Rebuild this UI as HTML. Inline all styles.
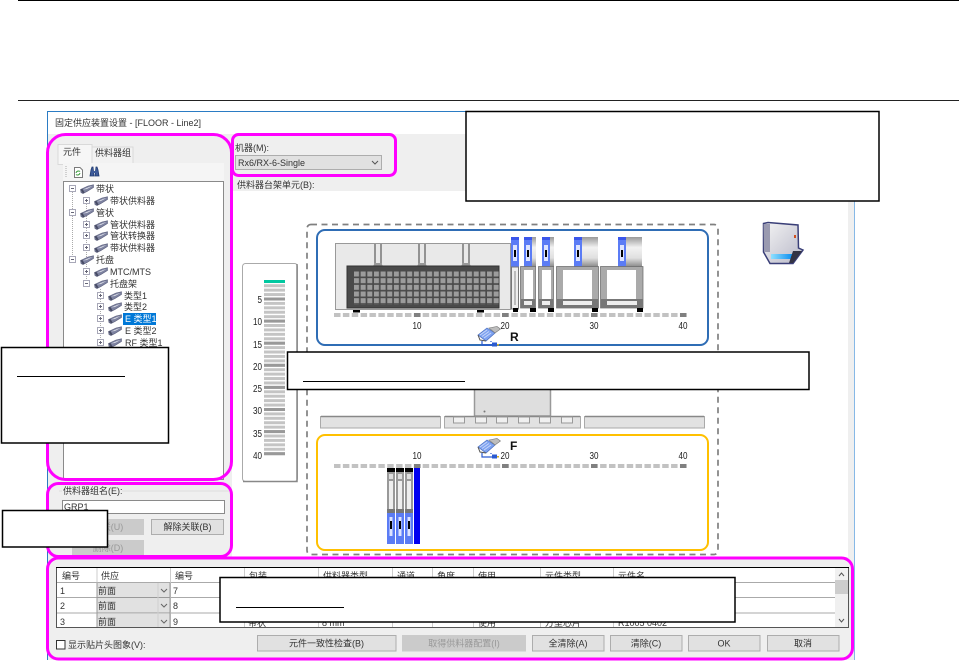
<!DOCTYPE html>
<html>
<head>
<meta charset="utf-8">
<style>
html,body{margin:0;padding:0;background:#fff;width:959px;height:661px;overflow:hidden}
svg{display:block}
text{font-family:"Liberation Sans","WenQuanYi Zen Hei","Noto Sans CJK SC",sans-serif;font-size:9px;fill:#333;white-space:pre}
.n{font-size:10px;fill:#222}
.b{text-anchor:middle}
.d{fill:#999}
</style>
</head>
<body>
<svg width="959" height="661" viewBox="0 0 959 661" xmlns="http://www.w3.org/2000/svg">
<defs>
<pattern id="hp" patternUnits="userSpaceOnUse" x="334" y="0" width="8.87" height="10"><rect width="6.5" height="10" fill="#c2c2c2"/></pattern>
<pattern id="vp" patternUnits="userSpaceOnUse" x="0" y="279.8" width="10" height="4.42"><rect width="10" height="3" fill="#c4c4c4"/></pattern>
<pattern id="gp" patternUnits="userSpaceOnUse" x="354" y="271.500" width="6.65" height="6.67"><rect width="5" height="5" fill="#9c9c9c"/></pattern>
<linearGradient id="cyl" x1="0" y1="0" x2="0" y2="1"><stop offset="0" stop-color="#999"/><stop offset=".35" stop-color="#f2f2f2"/><stop offset=".7" stop-color="#e0e0e0"/><stop offset="1" stop-color="#888"/></linearGradient>
<linearGradient id="mach" x1="0" y1="0" x2="1" y2="1"><stop offset="0" stop-color="#f4f4f4"/><stop offset="1" stop-color="#b8b8c8"/></linearGradient>
<linearGradient id="cy" x1="0" y1="0" x2="1" y2="0"><stop offset="0" stop-color="#8fe0ff"/><stop offset="1" stop-color="#1090f0"/></linearGradient>
<symbol id="c" width="14" height="10" viewBox="0 0 14 10"><path d="M0.500 5.500 L8 2 L13.500 0.800 L13.500 3.500 L7 7.500 L3 9.500 L1 8.500 Z" fill="#7d82a0" stroke="#5c607c" stroke-width=".6"/><path d="M3 5.500 L9 3 L12.500 2 L7 5 Z" fill="#d8dae4"/><path d="M0.500 5.500 L3 9.500 L4.500 8.500 L2.500 5 Z" fill="#474b64"/></symbol>
<symbol id="plus" width="7" height="7" viewBox="0 0 7 7"><rect x=".5" y=".5" width="6" height="6" fill="#fff" stroke="#a8a8b8"/><path d="M2 3.5H5M3.5 2V5" stroke="#667" stroke-width="1"/></symbol>
<symbol id="minus" width="7" height="7" viewBox="0 0 7 7"><rect x=".5" y=".5" width="6" height="6" fill="#fff" stroke="#a8a8b8"/><path d="M2 3.5H5" stroke="#667" stroke-width="1"/></symbol>
<symbol id="cart" width="24" height="21" viewBox="0 0 24 21"><path d="M1 9 L10 2 L18 7 L9 15 Z" fill="#7ea2f0" stroke="#4a6fc0" stroke-width=".7"/><path d="M3 9 L10 4 M5 10.5 L12 5.5 M7 12 L14 7" stroke="#c6d6fa" stroke-width="1"/><path d="M12 2 L20 0.5 L23.5 3 L18 7 Z" fill="#bdbdbd" stroke="#777" stroke-width=".6"/><path d="M1 9 L3 14 L9 15" fill="none" stroke="#555" stroke-width="1"/><path d="M5 15 V19 H16 M14 15 V16" fill="none" stroke="#2a5ad0" stroke-width="1.2"/><rect x="15" y="16.5" width="5" height="4" fill="#2a5ad0"/><rect x="20" y="18" width="2" height="1.5" fill="#d8b020"/></symbol>
<symbol id="bf" width="8" height="30" viewBox="0 0 8 30"><rect width="8" height="30" fill="#5b7cf5"/><rect y="0" width="8" height="3" fill="#3a56ea"/><rect x="2" y="8" width="4" height="16" fill="#dde4ff"/><rect x="3" y="13" width="2" height="7" fill="#000"/></symbol>
<symbol id="ff" width="8" height="76" viewBox="0 0 8 76"><rect width="8" height="4" fill="#000"/><rect y="4" width="8" height="41" fill="#999"/><rect x="2" y="6" width="4" height="5" fill="#ddd"/><rect x="2" y="13" width="4" height="30" fill="#eee"/><rect y="41" width="8" height="4" fill="#777"/><rect y="45" width="8" height="31" fill="#5b7cf5"/><rect x="2.5" y="49" width="3" height="19" fill="#dde4ff"/><rect x="3" y="53" width="2" height="8" fill="#000"/></symbol>
</defs>

<!-- doc lines -->
<rect x="18" y="0" width="941" height="1" fill="#000"/>
<rect x="18" y="100" width="941" height="1" fill="#222"/>

<!-- dialog -->
<rect x="47" y="111" width="420" height="1" fill="#2b7cc4"/>
<rect x="47" y="111" width="1" height="549" fill="#2b7cc4"/>
<rect x="854" y="201" width="1" height="459" fill="#86b8e6"/>
<rect x="48" y="134" width="800" height="57" fill="#efefef"/>
<rect x="48" y="134" width="184" height="423" fill="#efefef"/>
<rect x="848" y="191" width="6" height="366" fill="#efefef"/>
<rect x="48" y="557" width="806" height="103" fill="#efefef"/>
<text x="55" y="126">固定供应装置设置 - [FLOOR - Line2]</text>

<!-- tabs -->
<rect x="92" y="147" width="41" height="17" fill="#f2f2f2" stroke="#d9d9d9"/>
<rect x="58" y="144.5" width="34" height="20" fill="#f6f6f6" stroke="#d9d9d9"/>
<text x="63" y="155">元件</text>
<text x="95" y="156">供料器组</text>
<rect x="63" y="163" width="161" height="18" fill="#f5f5f5"/>
<path d="M66 166V178" stroke="#aaa" stroke-dasharray="1 1"/>
<path d="M74.500 167.500H80L82.500 170V177.500H74.500Z" fill="#fff" stroke="#7a7a7a"/>
<path d="M76 173a2.500 2.500 0 0 1 4-1.500M80 173a2.500 2.500 0 0 1-4 1.500" fill="none" stroke="#3a9a3a" stroke-width="1"/>
<path d="M90 176l1-6 1-3h1l1 9zM95 176l1-9h1l1 3 1 6z" fill="#3d5a9a" stroke="#1f3a70" stroke-width=".8"/>
<rect x="93" y="171" width="3" height="2" fill="#3d5a9a"/>

<!-- tree -->
<rect x="63.500" y="181.500" width="160" height="298" fill="#fff" stroke="#8a8a8a"/>
<path d="M72.500 192V259M86.500 204V283M100.500 289V345" fill="none" stroke="#aaa" stroke-dasharray="1 1"/>
<use href="#minus" x="69" y="185"/><use href="#c" x="80" y="184"/><text x="96" y="192">带状</text>
<use href="#plus" x="83" y="197"/><use href="#c" x="94" y="196"/><text x="110" y="204">带状供料器</text>
<use href="#minus" x="69" y="209"/><use href="#c" x="80" y="208"/><text x="96" y="216">管状</text>
<use href="#plus" x="83" y="221"/><use href="#c" x="94" y="220"/><text x="110" y="228">管状供料器</text>
<use href="#plus" x="83" y="232"/><use href="#c" x="94" y="231"/><text x="110" y="239">管状转换器</text>
<use href="#plus" x="83" y="244"/><use href="#c" x="94" y="243"/><text x="110" y="251">带状供料器</text>
<use href="#minus" x="69" y="256"/><use href="#c" x="80" y="255"/><text x="96" y="263">托盘</text>
<use href="#plus" x="83" y="268"/><use href="#c" x="94" y="267"/><text x="110" y="275">MTC/MTS</text>
<use href="#minus" x="83" y="280"/><use href="#c" x="94" y="279"/><text x="110" y="287">托盘架</text>
<use href="#plus" x="97" y="292"/><use href="#c" x="108" y="291"/><text x="124" y="299">类型1</text>
<use href="#plus" x="97" y="303"/><use href="#c" x="108" y="302"/><text x="124" y="310">类型2</text>
<use href="#plus" x="97" y="315"/><use href="#c" x="108" y="314"/><rect x="123" y="313" width="33" height="12" fill="#0078d7"/><text x="125" y="322" style="fill:#fff">E 类型1</text>
<use href="#plus" x="97" y="327"/><use href="#c" x="108" y="326"/><text x="125" y="334">E 类型2</text>
<use href="#plus" x="97" y="339"/><use href="#c" x="108" y="338"/><text x="125" y="346">RF 类型1</text>

<!-- group -->
<path d="M59 491H62M122 491H229" stroke="#dcdcdc"/>
<text x="63" y="494">供料器组名(E):</text>
<rect x="62.500" y="500.500" width="162" height="13" fill="#fff" stroke="#8a8a8a"/>
<text x="64" y="510">GRP1</text>
<rect x="72" y="519" width="72" height="16" fill="#cbcbcb"/>
<text x="108" y="530" class="b d">关联(U)</text>
<rect x="151.500" y="519.500" width="72" height="15" fill="#e1e1e1" stroke="#adadad"/>
<text x="187.500" y="530" class="b">解除关联(B)</text>
<rect x="72" y="540" width="72" height="16" fill="#cbcbcb"/>
<text x="108" y="551" class="b d">删除(D)</text>

<!-- machine -->
<text x="235" y="151">机器(M):</text>
<rect x="235.500" y="155.500" width="146" height="14" fill="#e1e1e1" stroke="#adadad"/>
<text x="238" y="166">Rx6/RX-6-Single</text>
<path d="M372 161l3 3 3-3" fill="none" stroke="#555"/>
<text x="237" y="188">供料器台架单元(B):</text>

<!-- gauge -->
<rect x="242.500" y="263.500" width="55" height="218" rx="3" fill="#fff" stroke="#aaa"/>
<path d="M297 264V481.500H243" fill="none" stroke="#888" stroke-width="1.500"/>
<rect x="264" y="280" width="21" height="176.500" fill="url(#vp)"/>
<rect x="264" y="280" width="21" height="3" fill="#00c8a0"/>
<rect x="264" y="297.500" width="21" height="3" fill="#999"/><rect x="264" y="319.600" width="21" height="3" fill="#999"/><rect x="264" y="341.700" width="21" height="3" fill="#999"/><rect x="264" y="363.800" width="21" height="3" fill="#999"/><rect x="264" y="385.900" width="21" height="3" fill="#999"/><rect x="264" y="408" width="21" height="3" fill="#999"/><rect x="264" y="430.100" width="21" height="3" fill="#999"/><rect x="264" y="452.200" width="21" height="3" fill="#999"/>
<g text-anchor="end">
<text class="n" x="262" y="303" textLength="4.500" lengthAdjust="spacingAndGlyphs">5</text>
<text class="n" x="262" y="325" textLength="9" lengthAdjust="spacingAndGlyphs">10</text>
<text class="n" x="262" y="348" textLength="9" lengthAdjust="spacingAndGlyphs">15</text>
<text class="n" x="262" y="370" textLength="9" lengthAdjust="spacingAndGlyphs">20</text>
<text class="n" x="262" y="392" textLength="9" lengthAdjust="spacingAndGlyphs">25</text>
<text class="n" x="262" y="414" textLength="9" lengthAdjust="spacingAndGlyphs">30</text>
<text class="n" x="262" y="437" textLength="9" lengthAdjust="spacingAndGlyphs">35</text>
<text class="n" x="262" y="459" textLength="9" lengthAdjust="spacingAndGlyphs">40</text>
</g>

<!-- dashed outer -->
<rect x="307" y="224.500" width="411" height="330" rx="4" fill="none" stroke="#808080" stroke-width="1.700" stroke-dasharray="6 4.500"/>

<!-- R zone -->
<rect x="317" y="230" width="391" height="115" rx="8" fill="none" stroke="#2f6db5" stroke-width="2"/>
<rect x="335.500" y="243.500" width="175" height="66" fill="#e9e9e9" stroke="#999"/>
<path d="M375 244V266M381 244V266M419 244V266M425 244V266M463 244V266M469 244V266" stroke="#777" stroke-width="1.500"/>
<path d="M373 266l2-3h6l2 3zM417 266l2-3h6l2 3zM461 266l2-3h6l2 3z" fill="#999"/>
<rect x="347" y="266" width="152" height="42" fill="#4a4a4a" stroke="#333"/>
<rect x="354" y="271.500" width="146" height="33.400" fill="url(#gp)"/>
<rect x="353" y="310" width="7" height="2.500" fill="#000"/><rect x="477" y="310" width="7" height="2.500" fill="#000"/>

<use href="#bf" x="511" y="237"/>
<rect x="524" y="237" width="12" height="30" fill="url(#cyl)"/><use href="#bf" x="524" y="237"/>
<rect x="542" y="237" width="12" height="30" fill="url(#cyl)"/><use href="#bf" x="542" y="237"/>
<rect x="574" y="237" width="24" height="30" fill="url(#cyl)"/><use href="#bf" x="574" y="237"/>
<rect x="618" y="237" width="24" height="30" fill="url(#cyl)"/><use href="#bf" x="618" y="237"/>

<rect x="511.500" y="267" width="7" height="42" fill="#eee" stroke="#777"/>
<rect x="514" y="271" width="2" height="34" fill="#bbb"/>
<g fill="#aaa" stroke="#666" stroke-width=".7">
<rect x="520.500" y="266.500" width="15" height="41.500"/><rect x="538.500" y="266.500" width="15" height="41.500"/><rect x="556.500" y="266.500" width="42" height="41.500"/><rect x="600.500" y="266.500" width="42.500" height="41.500"/>
</g>
<rect x="524" y="270" width="9" height="29" fill="#fff"/><rect x="542" y="270" width="9" height="29" fill="#fff"/><rect x="563" y="270" width="29" height="29" fill="#fff"/><rect x="607" y="270" width="29" height="29" fill="#fff"/>
<rect x="521" y="299" width="14.500" height="9" fill="#777"/><rect x="539" y="299" width="14.500" height="9" fill="#777"/><rect x="557" y="299" width="41.500" height="9" fill="#777"/><rect x="601" y="299" width="42" height="9" fill="#777"/>
<rect x="524" y="301" width="8" height="4" fill="#eee"/><rect x="542" y="301" width="8" height="4" fill="#eee"/><rect x="563" y="301" width="29" height="4" fill="#eee"/><rect x="607" y="301" width="30" height="4" fill="#eee"/>
<rect x="513" y="308" width="5" height="4" fill="#000"/><rect x="530" y="308" width="6" height="4" fill="#000"/><rect x="548" y="308" width="6" height="4" fill="#000"/><rect x="592" y="308" width="6" height="4" fill="#000"/><rect x="637" y="308" width="6" height="4" fill="#000"/>

<rect x="334" y="313" width="353" height="4" fill="url(#hp)"/>
<rect x="414" y="313" width="6.500" height="4" fill="#808080"/><rect x="502" y="313" width="6.500" height="4" fill="#808080"/><rect x="591" y="313" width="6.500" height="4" fill="#808080"/><rect x="680" y="313" width="6.500" height="4" fill="#808080"/>
<text class="n b" x="417" y="329" textLength="9" lengthAdjust="spacingAndGlyphs">10</text><text class="n b" x="505" y="329" textLength="9" lengthAdjust="spacingAndGlyphs">20</text><text class="n b" x="594" y="329" textLength="9" lengthAdjust="spacingAndGlyphs">30</text><text class="n b" x="683" y="329" textLength="9" lengthAdjust="spacingAndGlyphs">40</text>
<use href="#cart" x="477" y="326"/>
<text x="510" y="341" style="font-size:12px;font-weight:bold;fill:#111">R</text>

<!-- center head -->
<rect x="474.500" y="385" width="76" height="31" fill="#dedede" stroke="#999" stroke-width="1.500"/>
<circle cx="484.500" cy="411.500" r="1" fill="#777"/>
<g fill="#e2e2e2" stroke="#aaa">
<rect x="320.500" y="416.500" width="120" height="11.500"/><rect x="444.500" y="416.500" width="136" height="11.500"/><rect x="584.500" y="416.500" width="120" height="11.500"/>
</g>
<path d="M321 416.500H440M445 416.500H580M585 416.500H704" stroke="#888" stroke-width="1.500"/>
<g fill="#f0f0f0" stroke="#999"><rect x="453.500" y="417" width="11" height="6"/><rect x="475.500" y="417" width="11" height="6"/><rect x="496.500" y="417" width="11" height="6"/><rect x="518.500" y="417" width="11" height="6"/><rect x="539.500" y="417" width="11" height="6"/><rect x="561.500" y="417" width="11" height="6"/></g>

<!-- F zone -->
<rect x="317" y="435" width="391" height="115" rx="8" fill="none" stroke="#ffc000" stroke-width="2"/>
<rect x="334" y="464" width="353" height="4" fill="url(#hp)"/>
<rect x="414" y="464" width="6.500" height="4" fill="#808080"/><rect x="502" y="464" width="6.500" height="4" fill="#808080"/><rect x="591" y="464" width="6.500" height="4" fill="#808080"/><rect x="680" y="464" width="6.500" height="4" fill="#808080"/>
<text class="n b" x="417" y="459" textLength="9" lengthAdjust="spacingAndGlyphs">10</text><text class="n b" x="505" y="459" textLength="9" lengthAdjust="spacingAndGlyphs">20</text><text class="n b" x="594" y="459" textLength="9" lengthAdjust="spacingAndGlyphs">30</text><text class="n b" x="683" y="459" textLength="9" lengthAdjust="spacingAndGlyphs">40</text>
<use href="#cart" x="477" y="438"/>
<text x="510" y="450" style="font-size:12px;font-weight:bold;fill:#111">F</text>
<use href="#ff" x="387" y="468"/><use href="#ff" x="396" y="468"/><use href="#ff" x="405" y="468"/>
<rect x="414" y="468" width="6" height="76" fill="#0000f0"/>

<!-- machine icon -->
<path d="M763.500 223.500L768 222.500 798 225 798.500 248 803 250 793 263.500 770 263.500 763.500 252Z" fill="url(#mach)" stroke="#3a3f78" stroke-width="1.500"/>
<path d="M763.500 224H770V252H764Z" fill="#9a9ab0"/>
<rect x="771" y="254" width="21" height="5" fill="url(#cy)"/>
<path d="M793 251L802 251 793 263 789 263Z" fill="#334"/>
<rect x="794" y="235" width="2" height="3" fill="#d05020"/>

<!-- table -->
<rect x="56.500" y="567.500" width="792" height="60" fill="#fff" stroke="#555"/>
<rect x="56" y="567" width="793" height="1" fill="#000"/>
<path d="M57 582.500H835M57 597.500H835M57 613H835" stroke="#aaa"/>
<path d="M97 568V627M170.500 568V627M244.500 568V627M318.500 568V627M392.500 568V627M432.500 568V627M473.500 568V627M540.500 568V627M613.500 568V627" stroke="#ccc"/>
<rect x="97" y="583" width="73" height="14" fill="#e1e1e1"/><rect x="97" y="598" width="73" height="14.500" fill="#e1e1e1"/><rect x="97" y="614" width="73" height="13" fill="#e1e1e1"/>
<path d="M97 582.500V627M170 582.500V627M97 597.500H170M97 613H170" stroke="#999"/>
<path d="M158 583V627" stroke="#cfcfcf"/>
<text x="62" y="579">编号</text><text x="101" y="579">供应</text><text x="175" y="579">编号</text><text x="249" y="579">包装</text><text x="323" y="579">供料器类型</text><text x="397" y="579">通道</text><text x="437" y="579">角度</text><text x="478" y="579">使用</text><text x="545" y="579">元件类型</text><text x="618" y="579">元件名</text>
<text x="60" y="594">1</text><text x="60" y="609">2</text><text x="60" y="625">3</text>
<text x="98" y="594">前面</text><text x="98" y="609">前面</text><text x="98" y="625">前面</text>
<text x="173" y="594">7</text><text x="173" y="609">8</text><text x="173" y="625">9</text>
<path d="M161 589l3 3 3-3M161 604l3 3 3-3M161 620l3 3 3-3" fill="none" stroke="#666"/>
<rect x="835" y="568" width="13" height="59" fill="#f0f0f0"/>
<rect x="835" y="580" width="13" height="14" fill="#cdcdcd"/>
<path d="M839 576l2.500-3 2.500 3M839 619l2.500 3 2.500-3" fill="none" stroke="#555"/>
<text x="248" y="626">带状</text><text x="322" y="626">8 mm</text><text x="478" y="626">使用</text><text x="545" y="626">方型芯片</text><text x="618" y="626">R1005 0402</text>

<!-- bottom controls -->
<rect x="56.500" y="640.500" width="8.500" height="8.500" fill="#fff" stroke="#333"/>
<text x="68" y="648">显示贴片头图象(V):</text>
<g fill="#e1e1e1" stroke="#adadad">
<rect x="257.500" y="635.500" width="138.500" height="15.500"/>
<rect x="532.500" y="635.500" width="71.500" height="15.500"/>
<rect x="610.500" y="635.500" width="71.500" height="15.500"/>
<rect x="688.500" y="635.500" width="71.500" height="15.500"/>
<rect x="767.500" y="635.500" width="71.500" height="15.500"/>
</g>
<rect x="402" y="635" width="124" height="16.500" fill="#cbcbcb"/>
<text x="326.500" y="646.500" class="b">元件一致性检查(B)</text>
<text x="464" y="646.500" class="b d">取得供料器配置(I)</text>
<text x="568" y="646.500" class="b">全清除(A)</text>
<text x="646" y="646.500" class="b">清除(C)</text>
<text x="724" y="646.500" class="b">OK</text>
<text x="803" y="646.500" class="b">取消</text>

<!-- magenta frames -->
<g fill="none" stroke="#ff00ff" stroke-width="3">
<rect x="47.500" y="134.500" width="184" height="345" rx="18"/>
<rect x="47.500" y="483.500" width="184" height="73" rx="11"/>
<rect x="232.500" y="134.500" width="163" height="41" rx="6"/>
<rect x="47.500" y="558" width="805" height="101" rx="11"/>
</g>

<!-- annotation boxes -->
<g fill="#fff" stroke="#000">
<rect x="466" y="111.500" width="413" height="89.500" stroke-width="1.500"/>
<rect x="1.500" y="347.500" width="167" height="95.500" stroke-width="1.500"/>
<rect x="2.500" y="510.500" width="105" height="36.500" stroke-width="1.500"/>
<rect x="287.500" y="352" width="521.500" height="37.500" stroke-width="1.500"/>
<rect x="220" y="577.500" width="515" height="44.500" stroke-width="1.500"/>
</g>
<rect x="17" y="376" width="108" height="1" fill="#000"/>
<rect x="303" y="381" width="162" height="1" fill="#000"/>
<rect x="236" y="607" width="108" height="1" fill="#000"/>
</svg>
</body>
</html>
